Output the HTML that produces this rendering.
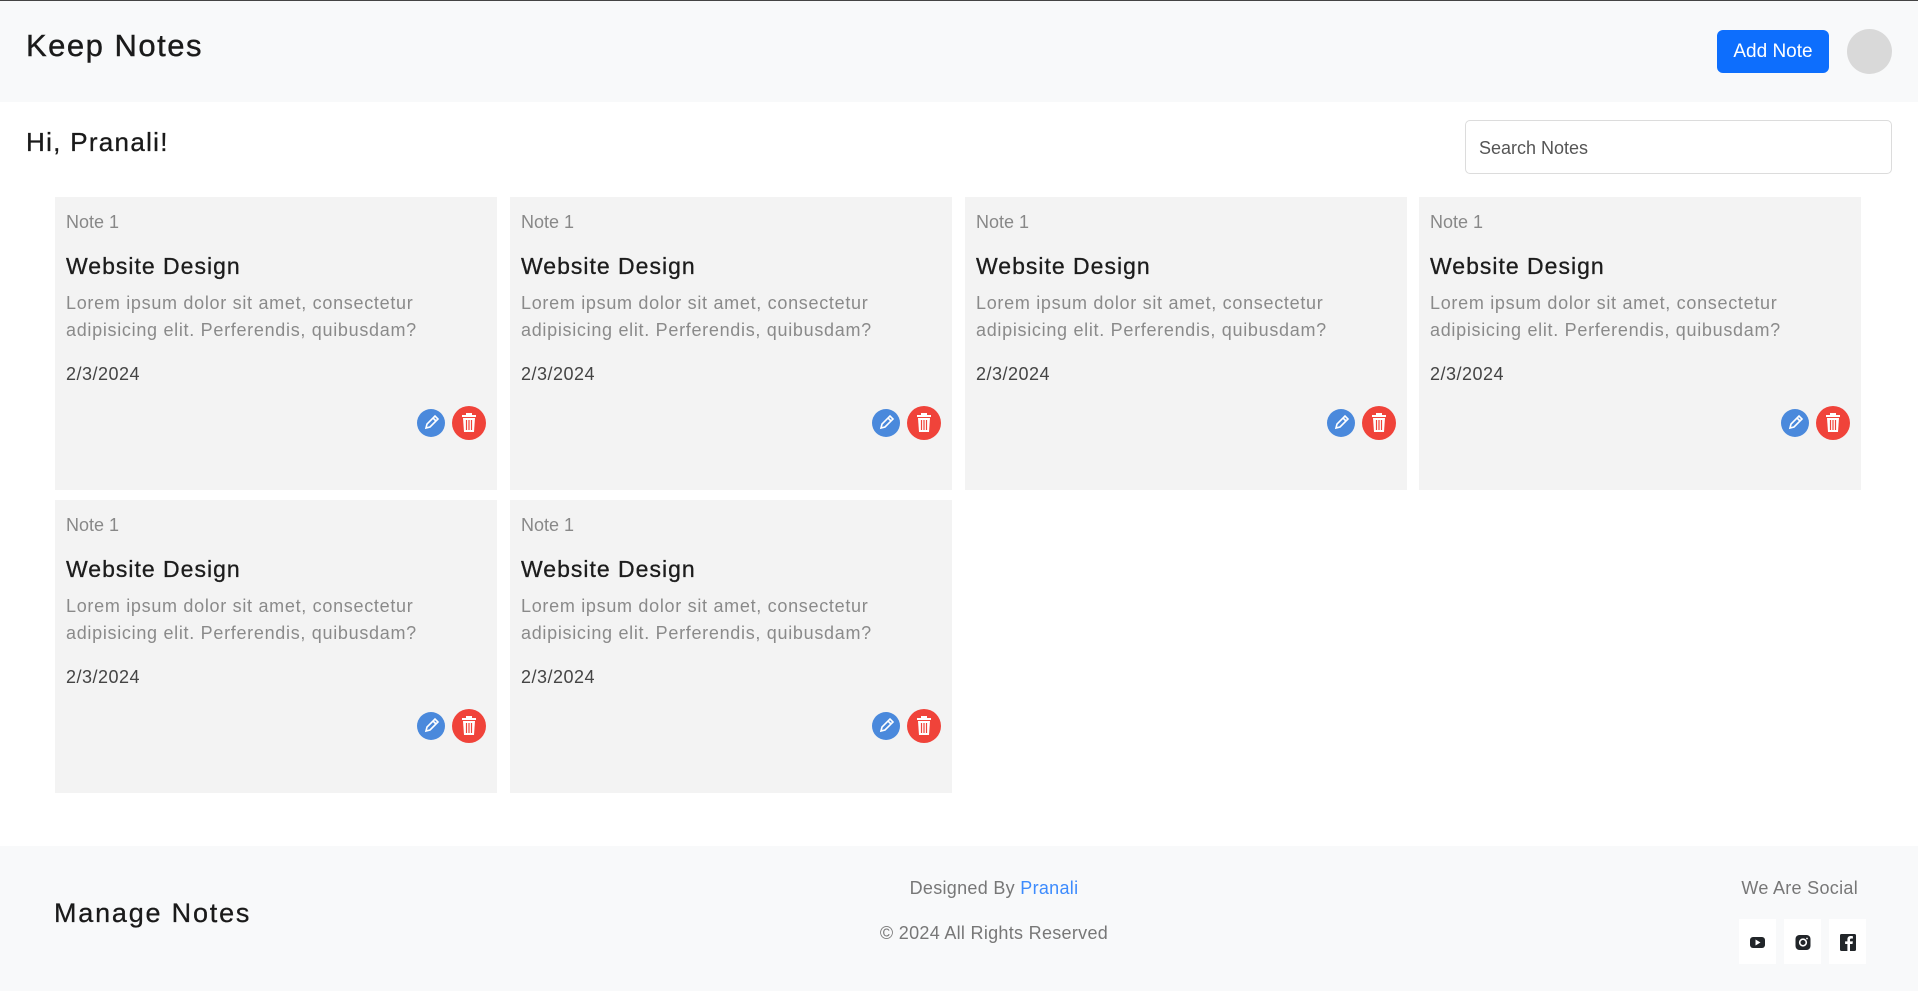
<!DOCTYPE html>
<html><head><meta charset="utf-8"><style>
*{margin:0;padding:0;box-sizing:border-box}
body{width:1918px;height:991px;position:relative;background:#fff;font-family:"Liberation Sans",sans-serif;overflow:hidden;color:#212529}
.abs{position:absolute}
.nav{left:0;top:0;width:1918px;height:102px;background:#f8f9fa;border-top:1px solid #444}
.card{position:absolute;width:442px;height:293px;background:#f3f3f3}
.card .n{position:absolute;left:11px;top:15px;font-size:18px;color:#888;font-weight:300}
.card .t{position:absolute;left:11px;top:56px;font-size:23px;color:#1c1c1c;letter-spacing:1px;-webkit-text-stroke:0.3px #1c1c1c}
.card .l{position:absolute;left:11px;top:93px;font-size:18px;line-height:27px;color:#8a8a8a;letter-spacing:0.7px;white-space:nowrap}
.card .d{position:absolute;left:11px;top:167px;font-size:18px;color:#444;letter-spacing:0.5px}
.card .e{position:absolute;left:362px;top:212px;width:28px;height:28px;border-radius:50%;background:#4a89dc}
.card .x{position:absolute;left:397px;top:209px;width:34px;height:34px;border-radius:50%;background:#f0433a}
.soc{position:absolute;top:919px;width:37px;height:45px;background:#fff}
</style></head><body>
<div class="abs nav"></div>
<div class="abs" style="left:26px;top:28px;font-size:31px;color:#1a1a1a;letter-spacing:1.5px;-webkit-text-stroke:0.4px #1a1a1a">Keep Notes</div>
<div class="abs" style="left:1717px;top:30px;width:112px;height:43px;background:#0d6efd;border-radius:6px;color:#fff;font-size:19px;text-align:center;line-height:43px">Add Note</div>
<div class="abs" style="left:1847px;top:29px;width:45px;height:45px;border-radius:50%;background:#d9d9d9"></div>
<div class="abs" style="left:26px;top:127px;font-size:26px;color:#1a1a1a;letter-spacing:1.3px;-webkit-text-stroke:0.3px #1a1a1a">Hi, Pranali!</div>
<div class="abs" style="left:1465px;top:120px;width:427px;height:54px;border:1px solid #dcdcdc;border-radius:5px;background:#fff;font-size:18px;color:#555;line-height:54px;padding-left:13px">Search Notes</div>

<div class="card" style="left:55px;top:197px"><div class="n">Note 1</div><div class="t">Website Design</div><div class="l">Lorem ipsum dolor sit amet, consectetur<br>adipisicing elit. Perferendis, quibusdam?</div><div class="d">2/3/2024</div><div class="e"><svg width="28" height="28" viewBox="0 0 28 28"><path d="M9 19l1-4 8-8 3 3-8 8z M16 9l3 3" fill="none" stroke="#fff" stroke-width="1.6"/></svg></div><div class="x"><svg width="34" height="34" viewBox="0 0 34 34"><rect x="10" y="9" width="14" height="2" fill="#fff"/><rect x="14" y="7" width="6" height="2" fill="#fff"/><path d="M11 12h12l-1 14h-10z" fill="#fff"/><path d="M14.5 14v10M17 14v10M19.5 14v10" stroke="#f0433a" stroke-width="1.2"/></svg></div></div>
<div class="card" style="left:510px;top:197px"><div class="n">Note 1</div><div class="t">Website Design</div><div class="l">Lorem ipsum dolor sit amet, consectetur<br>adipisicing elit. Perferendis, quibusdam?</div><div class="d">2/3/2024</div><div class="e"><svg width="28" height="28" viewBox="0 0 28 28"><path d="M9 19l1-4 8-8 3 3-8 8z M16 9l3 3" fill="none" stroke="#fff" stroke-width="1.6"/></svg></div><div class="x"><svg width="34" height="34" viewBox="0 0 34 34"><rect x="10" y="9" width="14" height="2" fill="#fff"/><rect x="14" y="7" width="6" height="2" fill="#fff"/><path d="M11 12h12l-1 14h-10z" fill="#fff"/><path d="M14.5 14v10M17 14v10M19.5 14v10" stroke="#f0433a" stroke-width="1.2"/></svg></div></div>
<div class="card" style="left:965px;top:197px"><div class="n">Note 1</div><div class="t">Website Design</div><div class="l">Lorem ipsum dolor sit amet, consectetur<br>adipisicing elit. Perferendis, quibusdam?</div><div class="d">2/3/2024</div><div class="e"><svg width="28" height="28" viewBox="0 0 28 28"><path d="M9 19l1-4 8-8 3 3-8 8z M16 9l3 3" fill="none" stroke="#fff" stroke-width="1.6"/></svg></div><div class="x"><svg width="34" height="34" viewBox="0 0 34 34"><rect x="10" y="9" width="14" height="2" fill="#fff"/><rect x="14" y="7" width="6" height="2" fill="#fff"/><path d="M11 12h12l-1 14h-10z" fill="#fff"/><path d="M14.5 14v10M17 14v10M19.5 14v10" stroke="#f0433a" stroke-width="1.2"/></svg></div></div>
<div class="card" style="left:1419px;top:197px"><div class="n">Note 1</div><div class="t">Website Design</div><div class="l">Lorem ipsum dolor sit amet, consectetur<br>adipisicing elit. Perferendis, quibusdam?</div><div class="d">2/3/2024</div><div class="e"><svg width="28" height="28" viewBox="0 0 28 28"><path d="M9 19l1-4 8-8 3 3-8 8z M16 9l3 3" fill="none" stroke="#fff" stroke-width="1.6"/></svg></div><div class="x"><svg width="34" height="34" viewBox="0 0 34 34"><rect x="10" y="9" width="14" height="2" fill="#fff"/><rect x="14" y="7" width="6" height="2" fill="#fff"/><path d="M11 12h12l-1 14h-10z" fill="#fff"/><path d="M14.5 14v10M17 14v10M19.5 14v10" stroke="#f0433a" stroke-width="1.2"/></svg></div></div>
<div class="card" style="left:55px;top:500px"><div class="n">Note 1</div><div class="t">Website Design</div><div class="l">Lorem ipsum dolor sit amet, consectetur<br>adipisicing elit. Perferendis, quibusdam?</div><div class="d">2/3/2024</div><div class="e"><svg width="28" height="28" viewBox="0 0 28 28"><path d="M9 19l1-4 8-8 3 3-8 8z M16 9l3 3" fill="none" stroke="#fff" stroke-width="1.6"/></svg></div><div class="x"><svg width="34" height="34" viewBox="0 0 34 34"><rect x="10" y="9" width="14" height="2" fill="#fff"/><rect x="14" y="7" width="6" height="2" fill="#fff"/><path d="M11 12h12l-1 14h-10z" fill="#fff"/><path d="M14.5 14v10M17 14v10M19.5 14v10" stroke="#f0433a" stroke-width="1.2"/></svg></div></div>
<div class="card" style="left:510px;top:500px"><div class="n">Note 1</div><div class="t">Website Design</div><div class="l">Lorem ipsum dolor sit amet, consectetur<br>adipisicing elit. Perferendis, quibusdam?</div><div class="d">2/3/2024</div><div class="e"><svg width="28" height="28" viewBox="0 0 28 28"><path d="M9 19l1-4 8-8 3 3-8 8z M16 9l3 3" fill="none" stroke="#fff" stroke-width="1.6"/></svg></div><div class="x"><svg width="34" height="34" viewBox="0 0 34 34"><rect x="10" y="9" width="14" height="2" fill="#fff"/><rect x="14" y="7" width="6" height="2" fill="#fff"/><path d="M11 12h12l-1 14h-10z" fill="#fff"/><path d="M14.5 14v10M17 14v10M19.5 14v10" stroke="#f0433a" stroke-width="1.2"/></svg></div></div>

<div class="abs" style="left:0;top:846px;width:1918px;height:145px;background:#f8f9fa"></div>
<div class="abs" style="left:54px;top:898px;font-size:27px;color:#1a1a1a;letter-spacing:1.8px;-webkit-text-stroke:0.3px #1a1a1a">Manage Notes</div>
<div class="abs" style="left:794px;top:878px;width:400px;text-align:center;font-size:18px;color:#777;letter-spacing:0.3px">Designed By <span style="color:#3d8bfd">Pranali</span></div>
<div class="abs" style="left:794px;top:923px;width:400px;text-align:center;font-size:18px;color:#777;letter-spacing:0.3px">© 2024 All Rights Reserved</div>
<div class="abs" style="right:60px;top:878px;font-size:18px;color:#777;letter-spacing:0.3px">We Are Social</div>
<div class="soc" style="left:1739px"><svg width="37" height="45" viewBox="0 0 37 45"><rect x="11" y="18" width="15" height="11" rx="3" fill="#212529"/><path d="M16.5 20.5v6l5-3z" fill="#fff"/></svg></div>
<div class="soc" style="left:1784px"><svg width="37" height="45" viewBox="0 0 37 45"><rect x="11.5" y="16" width="15" height="15" rx="4" fill="#212529"/><circle cx="19" cy="23.5" r="3.3" fill="none" stroke="#fff" stroke-width="1.6"/><circle cx="23" cy="19.5" r="0.9" fill="#fff"/></svg></div>
<div class="soc" style="left:1829px"><svg width="37" height="45" viewBox="0 0 37 45"><rect x="11" y="15" width="16" height="17" rx="1.5" fill="#212529"/><path d="M21 32v-7h2.5l.4-2.6H21v-1.6c0-.8.3-1.3 1.3-1.3h1.6v-2.3c-.5-.1-1.3-.2-2.1-.2-2.2 0-3.4 1.2-3.4 3.5v1.9h-2.3V25h2.3v7z" fill="#fff"/></svg></div>
</body></html>
